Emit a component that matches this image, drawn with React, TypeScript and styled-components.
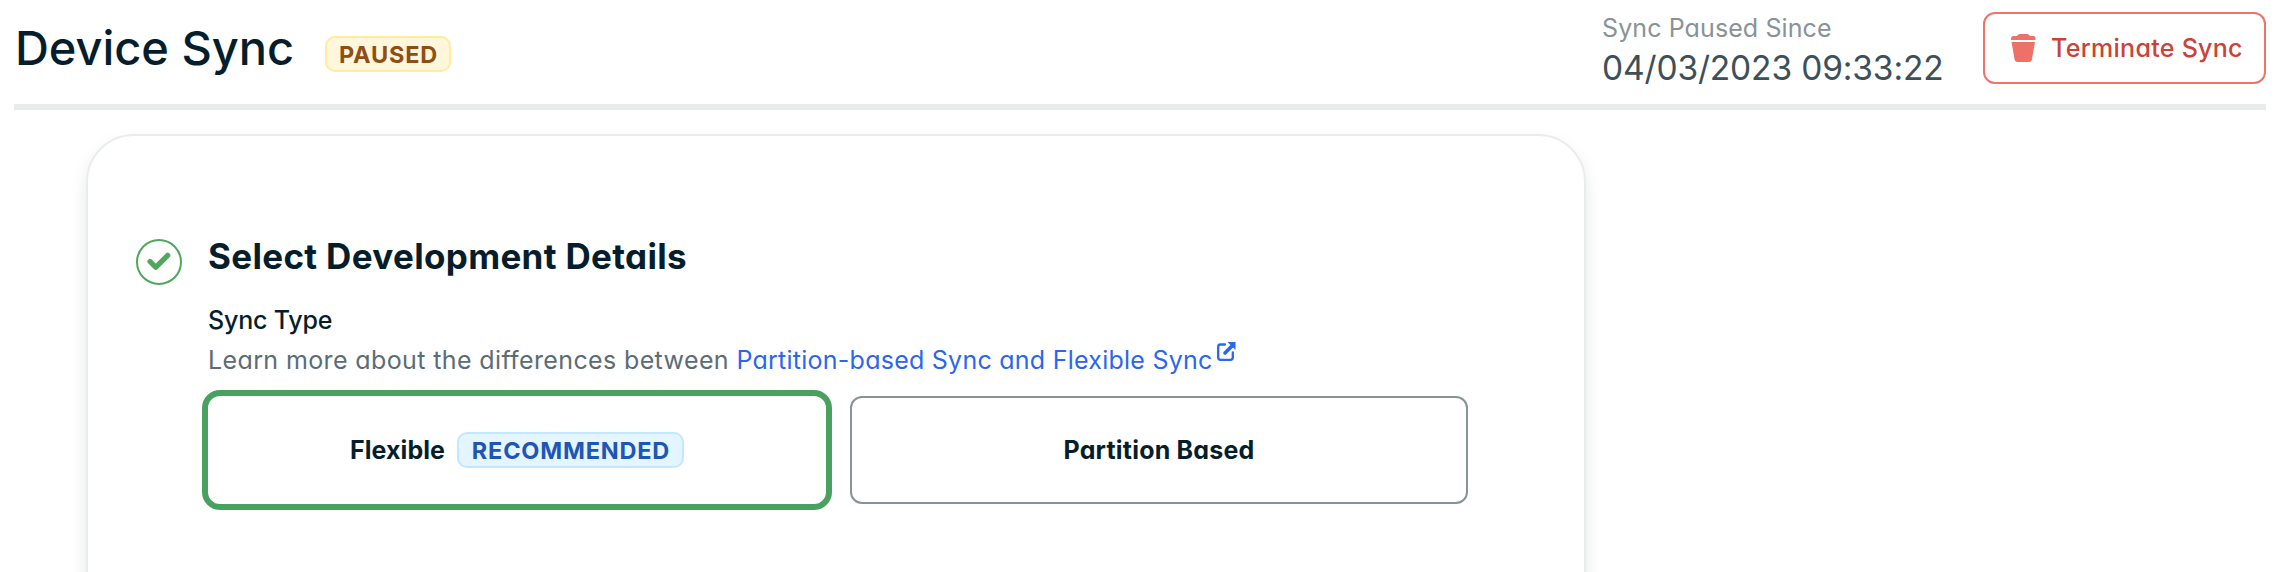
import React from "react";
import styled, { createGlobalStyle } from "styled-components";

const GlobalStyle = createGlobalStyle`
  *, *::before, *::after { box-sizing: border-box; }
  html, body { margin: 0; background: #fff; }
  body {
    height: 572px;
    overflow: hidden;
    font-family: Inter, "Liberation Sans", sans-serif;
    font-feature-settings: "cv11" 1;
    color: #061e2b;
  }
`;

const Page = styled.div`
  height: 572px;
  overflow: hidden;
  padding: 0 24px 0 14px;
`;

const Header = styled.header`
  display: flex;
  align-items: flex-start;
  height: 110px;
  border-bottom: 6px solid #e8edeb;
`;

const PageTitle = styled.h1`
  margin: 19px 0 0;
  padding-left: 1px;
  width: 311px;
  font-size: 47px;
  line-height: 58px;
  font-weight: 500;
  letter-spacing: -0.05px;
  white-space: nowrap;
`;

const Badge = styled.span<{ $tone: "yellow" | "blue"; $width: number }>`
  display: inline-flex;
  align-items: center;
  justify-content: center;
  padding: 1px 0 0 1px;
  width: ${(p) => p.$width}px;
  height: 36px;
  border: 2px solid ${(p) => (p.$tone === "yellow" ? "#ffec9e" : "#c3e7fe")};
  border-radius: 10px;
  background: ${(p) => (p.$tone === "yellow" ? "#fef7db" : "#e3f6ff")};
  color: ${(p) => (p.$tone === "yellow" ? "#8f4f14" : "#2055b5")};
  font-size: 23.5px;
  line-height: 32px;
  font-weight: 700;
  letter-spacing: 0.8px;
`;

const StatusSlot = styled.div`
  display: flex;
  margin-top: 36px;
`;

const PausedSince = styled.div`
  margin: 12px 0 0 auto;
  width: 381px;
  white-space: nowrap;
`;

const PausedLabel = styled.div`
  color: #889397;
  font-size: 25px;
  line-height: 32px;
  letter-spacing: 0.1px;
`;

const PausedTime = styled.div`
  margin-top: 4px;
  color: #3d4f58;
  font-size: 33.5px;
  line-height: 40px;
  letter-spacing: -0.15px;
`;

const TerminateButton = styled.button`
  display: flex;
  align-items: center;
  margin: 12px 0 0;
  padding: 0 0 0 26px;
  width: 283px;
  height: 72px;
  border: 2px solid #ef7468;
  border-radius: 12px;
  background: #fff;
  color: #cb4238;
  font: inherit;
  font-size: 25px;
  font-weight: 500;
  letter-spacing: 0.3px;
  white-space: nowrap;

  svg { margin-right: 15px; }
`;

const Card = styled.main`
  margin: 24px 0 0 72px;
  width: 1500px;
  height: 700px;
  padding: 103px 0 0 48px;
  display: flex;
  align-items: flex-start;
  border: 2px solid #e8edeb;
  border-radius: 48px;
  box-shadow: 0 8px 20px -4px rgba(0, 30, 43, 0.15);
`;

const StepMark = styled.div`
  display: flex;
  align-items: center;
  justify-content: center;
  width: 46px;
  height: 46px;
  border: 2px solid #4fa75e;
  border-radius: 50%;
`;

const Details = styled.section`
  margin-left: 26px;
  width: 1260px;
`;

const DetailsTitle = styled.h2`
  margin: -5px 0 0;
  font-size: 35px;
  line-height: 44px;
  font-weight: 700;
  letter-spacing: 0.33px;
  white-space: nowrap;
`;

const FieldLabel = styled.div`
  margin-top: 26px;
  font-size: 25px;
  line-height: 32px;
  font-weight: 500;
  letter-spacing: -0.2px;
`;

const FieldHint = styled.div`
  display: flex;
  align-items: flex-start;
  margin-top: 8px;
  height: 32px;
  color: #5c6c75;
  font-size: 25px;
  line-height: 32px;
  letter-spacing: 0.38px;
  white-space: pre;
`;

const DocsLink = styled.a`
  display: flex;
  align-items: flex-start;
  color: #2b66f0;
  letter-spacing: 0.25px;
  text-decoration: none;

  svg { margin: -2px 0 0 4px; }
`;

const Options = styled.div`
  display: flex;
  align-items: center;
  gap: 18px;
  margin: 14px 0 0 -6px;
`;

const Option = styled.button<{ $selected?: boolean }>`
  display: flex;
  align-items: center;
  justify-content: center;
  gap: 12px;
  padding: 0;
  width: ${(p) => (p.$selected ? 630 : 618)}px;
  height: ${(p) => (p.$selected ? 120 : 108)}px;
  border: ${(p) => (p.$selected ? "6px solid #49a160" : "2px solid #889397")};
  border-radius: ${(p) => (p.$selected ? 18 : 12)}px;
  background: #fff;
  color: #061e2b;
  font: inherit;
  font-size: 25px;
  font-weight: 700;
  letter-spacing: ${(p) => (p.$selected ? 0.05 : 0.2)}px;
  white-space: nowrap;
`;

const TrashIcon = () => (
  <svg width="25" height="28" viewBox="0 0 25 28" fill="#ed7166">
    <path d="M2.500 2H6L7.400 .5Q8 0 8.800 0H16.200Q17 0 17.600 .5L19 2H22.500Q24.500 2 24.500 4V6H0V4.500Q0 2 2.500 2Z" />
    <path d="M.5 8H24L20.900 25.500Q20.400 28 18 28H6.500Q4.100 28 3.600 25.500Z" />
  </svg>
);

const CheckIcon = () => (
  <svg width="24" height="20" viewBox="0 0 24 20" fill="none" stroke="#4fa75e" strokeWidth="5.200" strokeLinejoin="round">
    <path d="M3 9.500L8.700 15.300L20.700 3.300" strokeLinecap="round" />
  </svg>
);

const ExternalIcon = () => (
  <svg width="19" height="19" viewBox="0 0 19 19" fill="none" stroke="#2b66f0">
    <path d="M8 2.500H3.500Q1.200 2.500 1.200 4.800V15.500Q1.200 17.800 3.500 17.800H13.500Q15.800 17.800 15.800 15.500V10.500" strokeWidth="2.300" strokeLinecap="round" />
    <path d="M8 11L14.500 4.500" strokeWidth="3.600" strokeLinecap="round" />
    <path d="M10.500 0H18.500V8Z" fill="#2b66f0" stroke="none" />
  </svg>
);

export default function App() {
  return (
    <Page>
      <GlobalStyle />
      <Header>
        <PageTitle>Device Sync</PageTitle>
        <StatusSlot>
          <Badge $tone="yellow" $width={126}>PAUSED</Badge>
        </StatusSlot>
        <PausedSince>
          <PausedLabel>Sync Paused Since</PausedLabel>
          <PausedTime>04/03/2023 09:33:22</PausedTime>
        </PausedSince>
        <TerminateButton>
          <TrashIcon />
          Terminate Sync
        </TerminateButton>
      </Header>
      <Card>
        <StepMark>
          <CheckIcon />
        </StepMark>
        <Details>
          <DetailsTitle>Select Development Details</DetailsTitle>
          <FieldLabel>Sync Type</FieldLabel>
          <FieldHint>
            <span>Learn more about the differences between </span>
            <DocsLink>
              Partition-based Sync and Flexible Sync
              <ExternalIcon />
            </DocsLink>
          </FieldHint>
          <Options>
            <Option $selected>
              Flexible
              <Badge $tone="blue" $width={227}>RECOMMENDED</Badge>
            </Option>
            <Option>Partition Based</Option>
          </Options>
        </Details>
      </Card>
    </Page>
  );
}
